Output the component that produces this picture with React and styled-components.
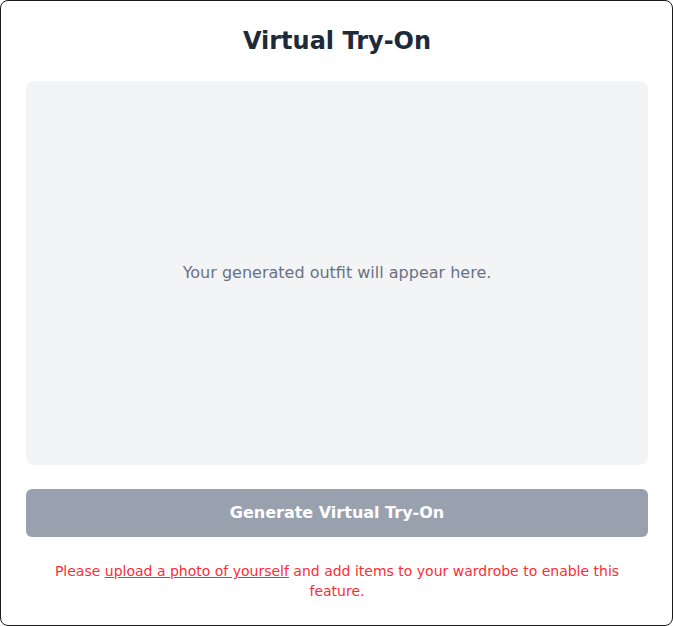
import React from "react";
import styled, { createGlobalStyle } from "styled-components";

const Global = createGlobalStyle`
  * { box-sizing: border-box; }
  body { margin: 0; font-family: "DejaVu Sans", sans-serif; background: #fff; }
`;

const Card = styled.div`
  width: 673px;
  border: 1px solid #1a1a1a;
  border-radius: 8px;
  padding: 24px 24px 24px 25px;
  display: flex;
  flex-direction: column;
  gap: 24px;
  background: #fff;
`;

const Title = styled.h2`
  margin: 0;
  font-size: 24px;
  line-height: 32px;
  font-weight: 700;
  color: #1e2939;
  text-align: center;
`;

const Preview = styled.div`
  height: 384px;
  background: #f3f4f6;
  border-radius: 8px;
  display: flex;
  align-items: center;
  justify-content: center;
`;

const Placeholder = styled.p`
  margin: 0;
  font-size: 16px;
  line-height: 24px;
  color: #6a7282;
`;

const Button = styled.button`
  height: 48px;
  border: none;
  border-radius: 6px;
  background: #99a1af;
  color: #fff;
  font-family: inherit;
  font-size: 16px;
  font-weight: 700;
  line-height: 24px;
  cursor: not-allowed;
`;

const Notice = styled.p`
  margin: 0;
  font-size: 14px;
  line-height: 20px;
  color: #fb2c36;
  text-align: center;
`;

const Link = styled.a`
  color: inherit;
  text-decoration: underline;
`;

export default function App() {
  return (
    <>
      <Global />
      <Card>
        <Title>Virtual Try-On</Title>
        <Preview>
          <Placeholder>Your generated outfit will appear here.</Placeholder>
        </Preview>
        <Button disabled>Generate Virtual Try-On</Button>
        <Notice>
          Please <Link href="#">upload a photo of yourself</Link> and add items to your wardrobe to enable this feature.
        </Notice>
      </Card>
    </>
  );
}
